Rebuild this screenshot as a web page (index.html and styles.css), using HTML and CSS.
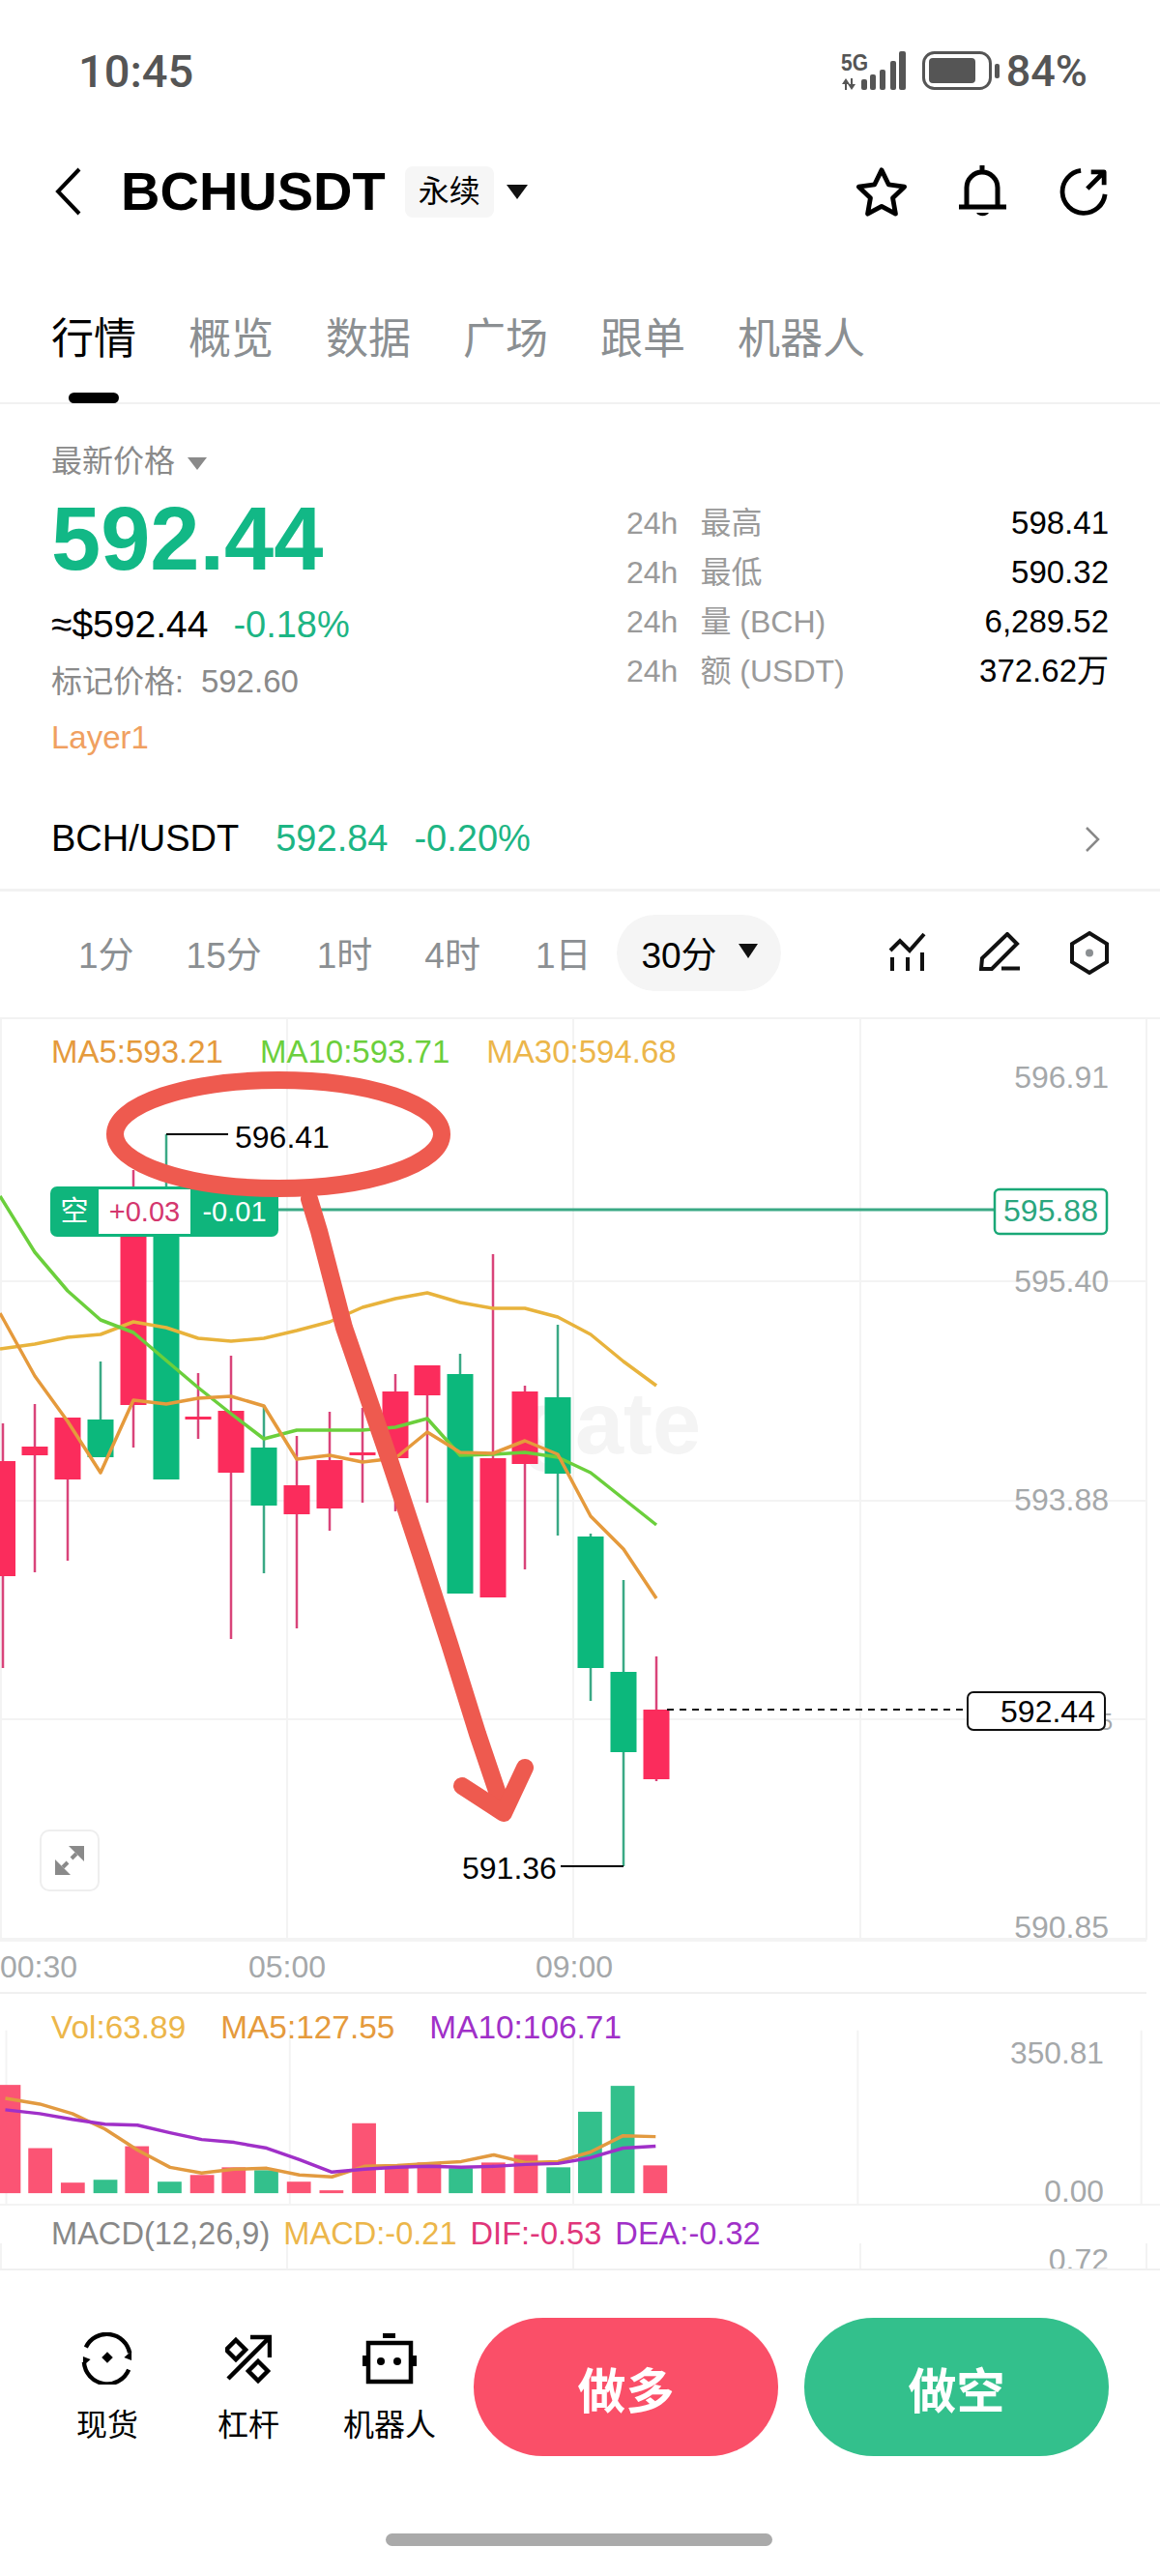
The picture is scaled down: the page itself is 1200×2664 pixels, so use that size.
FILE: index.html
```html
<!DOCTYPE html>
<html lang="zh-CN">
<head>
    <meta charset="UTF-8">
    <meta name="viewport" content="width=device-width, initial-scale=1.0">
    <title>BCHUSDT</title>
    <link rel="stylesheet" href="styles.css">
</head>
<body>

<!-- status bar -->
<div class="status-bar">
  <span class="clock">10:45</span>
  <div class="status-icons">
    <svg class="signal" viewBox="0 0 70 42">
      <text x="1" y="21" class="signal-text" textLength="28" lengthAdjust="spacingAndGlyphs">5G</text>
      <path d="M6 29 2 35h3v6h2v-6h3zM12 41l4-6h-3v-6h-2v6H8z"/>
      <rect x="22" y="30" width="6" height="11" rx="2"/>
      <rect x="31" y="25" width="6" height="16" rx="2"/>
      <rect x="41" y="20" width="6" height="21" rx="2"/>
      <rect x="52" y="11" width="6" height="30" rx="2"/>
      <rect x="61" y="1" width="7" height="40" rx="2"/>
    </svg>
    <svg class="battery" viewBox="0 0 80 40">
      <rect x="1.500" y="1.500" width="69" height="37" rx="11" fill="none" stroke="#555" stroke-width="3"/>
      <rect x="7" y="7" width="48" height="26" rx="4" fill="#555"/>
      <rect x="75" y="13" width="5" height="15" rx="2" fill="#555"/>
    </svg>
    <span class="battery-text">84%</span>
  </div>
</div>

<!-- header -->
<div class="top-nav">
  <svg class="back-icon" viewBox="0 0 30 50"><path d="M26 2 4 25l22 23"/></svg>
  <h1 class="symbol">BCHUSDT</h1>
  <span class="contract-tag">永续</span>
  <span class="caret caret-dark"></span>
  <div class="nav-actions">
    <svg class="nav-icon icon-star" viewBox="0 0 56 54"><path d="M28 4l7.500 15.500 17 2.500-12.500 12 3 17-15-8-15 8 3-17L3.500 22l17-2.500z"/></svg>
    <svg class="nav-icon icon-bell" viewBox="0 0 50 54"><path d="M8 43V23a16 16 0 0 1 32 0V43M0 43h49M24 0v7"/><path class="solid" d="M18 49h13a7 5 0 0 1-13 0z"/></svg>
    <svg class="nav-icon icon-share" viewBox="0 0 52 52"><path d="M23 3.500A23 23 0 1 0 49 29M30 23 47 6M34 5h14v14"/></svg>
  </div>
</div>

<!-- tabs -->
<div class="tabs">
  <div class="tab active">行情<span class="tab-line"></span></div>
  <div class="tab">概览</div>
  <div class="tab">数据</div>
  <div class="tab">广场</div>
  <div class="tab">跟单</div>
  <div class="tab">机器人</div>
</div>

<!-- price info -->
<div class="market-info">
  <div class="price-col">
    <div class="price-label">最新价格<span class="caret caret-grey"></span></div>
    <div class="last-price">592.44</div>
    <div class="usd-row"><span>≈$592.44</span><span class="green">-0.18%</span></div>
    <div class="mark-price">标记价格:<span class="mark-value">592.60</span></div>
    <div class="layer-tag">Layer1</div>
  </div>
  <div class="stats-col">
    <div class="stat-row"><span class="stat-name">24h</span><span class="stat-name">最高</span><span class="stat-value">598.41</span></div>
    <div class="stat-row"><span class="stat-name">24h</span><span class="stat-name">最低</span><span class="stat-value">590.32</span></div>
    <div class="stat-row"><span class="stat-name">24h</span><span class="stat-name">量 (BCH)</span><span class="stat-value">6,289.52</span></div>
    <div class="stat-row"><span class="stat-name">24h</span><span class="stat-name">额 (USDT)</span><span class="stat-value">372.62万</span></div>
  </div>
</div>

<div class="spot-row">
  <span class="spot-name">BCH/USDT</span>
  <span class="green">592.84</span>
  <span class="green">-0.20%</span>
  <svg class="spot-arrow" viewBox="0 0 16 26"><path d="M2 1l12 12L2 25"/></svg>
</div>

<!-- time frames -->
<div class="timeframes">
  <span class="tf tf-1m">1分</span>
  <span class="tf tf-15m">15分</span>
  <span class="tf tf-1h">1时</span>
  <span class="tf tf-4h">4时</span>
  <span class="tf tf-1d">1日</span>
  <span class="tf-pill">30分<span class="caret caret-small"></span></span>
  <div class="tool-icons">
    <svg class="tool-chart" viewBox="0 0 40 44"><path d="M2 20l10-10 10 10L37 3M4 27v14M20 27v14M35 22v19"/></svg>
    <svg class="tool-pencil" viewBox="0 0 44 42"><path d="M29 2l10 10-26 26H2l1-11zM23 37.500h19"/></svg>
    <svg class="tool-hex" viewBox="0 0 42 46"><path d="M21 3l18 11v19L21 44 3 33V14z"/><circle class="solid" cx="21" cy="23.500" r="4"/></svg>
  </div>
</div>

<!-- candle chart -->
<div class="kline-pane">
  <svg class="pane-svg" viewBox="0 1054 1200 952">
    <path class="grid" d="M1 1054V2006M297 1054V2006M593 1054V2006M890 1054V2006M1186 1054V2006M0 1325H1186M0 1552H1186M0 1778H1186M0 2005H1186"/>
    <text class="watermark" x="540" y="1503">gate</text>

    <path class="wick-red" d="M3 1472V1725M36 1452V1626M70 1466V1614M138 1210V1497M205 1420V1488M239 1402V1695M307 1485V1684M341 1460V1583M375 1456V1554M409 1421V1563M442 1412V1554M510 1297V1652M543 1433V1623M679 1713V1842"/>
    <path class="wick-green" d="M104 1408V1507M172 1173V1530M273 1453V1627M476 1400V1648M577 1370V1588M611 1586V1759M645 1634V1930"/>

    <g class="body-red">
      <rect x="-11" y="1511" width="27" height="119"/>
      <rect x="22.500" y="1496" width="27" height="9"/>
      <rect x="56.500" y="1466" width="27" height="64"/>
      <rect x="124.500" y="1270" width="27" height="183"/>
      <rect x="191.500" y="1465" width="27" height="3"/>
      <rect x="225.500" y="1459" width="27" height="64"/>
      <rect x="293.500" y="1536" width="27" height="30"/>
      <rect x="327.500" y="1510" width="27" height="50"/>
      <rect x="361.500" y="1502" width="27" height="3"/>
      <rect x="395.500" y="1439" width="27" height="69"/>
      <rect x="428.500" y="1412" width="27" height="31"/>
      <rect x="496.500" y="1508" width="27" height="144"/>
      <rect x="529.500" y="1439" width="27" height="75"/>
      <rect x="665.500" y="1768" width="27" height="72"/>
    </g>
    <g class="body-green">
      <rect x="90.500" y="1468" width="27" height="39"/>
      <rect x="158.500" y="1270" width="27" height="260"/>
      <rect x="259.500" y="1497" width="27" height="60"/>
      <rect x="462.500" y="1421" width="27" height="227"/>
      <rect x="563.500" y="1445" width="27" height="79"/>
      <rect x="597.500" y="1589" width="27" height="136"/>
      <rect x="631.500" y="1729" width="27" height="83"/>
    </g>

    <!-- moving averages -->
    <polyline class="ma ma30" points="0,1395 36,1390 70,1383 104,1380 138,1367 172,1373 205,1384 239,1387 273,1384 307,1376 341,1367 375,1352 409,1343 442,1337 476,1347 510,1353 543,1353 577,1362 611,1380 645,1408 679,1433"/>
    <polyline class="ma ma10" points="0,1237 36,1295 70,1335 104,1365 138,1378 172,1407 205,1435 239,1462 273,1488 307,1479 341,1479 375,1479 409,1476 442,1467 476,1505 510,1504 543,1502 577,1507 611,1523 645,1550 679,1577"/>
    <polyline class="ma ma5" points="0,1358 36,1423 70,1470 104,1523 138,1448 172,1452 205,1446 239,1444 273,1454 307,1509 341,1505 375,1512 409,1508 442,1481 476,1502 510,1503 543,1490 577,1504 611,1568 645,1602 679,1653"/>

    <!-- price lines and labels -->
    <path class="position-line" d="M288 1251H1030"/>
    <path class="last-line" d="M690 1768H1001"/>
    <path class="leader" d="M172 1173H236M580 1930H645"/>
    <text class="axis" x="1147" y="1125">596.91</text>
    <text class="axis" x="1147" y="1336">595.40</text>
    <text class="axis" x="1147" y="1562">593.88</text>
    <text class="axis" x="1147" y="2004">590.85</text>
    <text class="peak" x="243" y="1187">596.41</text>
    <text class="peak" x="478" y="1943">591.36</text>
    <text class="axis axis-peek" x="1151" y="1789">5</text>
    <rect class="box-position" x="1029" y="1230" width="116" height="46" rx="5"/>
    <text class="box-text green-text" x="1087" y="1263">595.88</text>
    <rect class="box-last" x="1001" y="1750" width="142" height="39" rx="6"/>
    <text class="box-text" x="1084" y="1781">592.44</text>
  </svg>

  <div class="legend kline-legend">
    <span class="c-orange">MA5:593.21</span>
    <span class="c-green">MA10:593.71</span>
    <span class="c-yellow">MA30:594.68</span>
  </div>

  <div class="position-tag">
    <span class="tag-side">空</span>
    <span class="tag-pnl">+0.03</span>
    <span class="tag-rate">-0.01</span>
  </div>

  <div class="expand-btn">
    <svg viewBox="0 0 62 64"><path class="solid" d="M46 17v16L30 17zM16 47V31l16 16z"/><path d="M38 25l-5 5M24 39l5-5"/></svg>
  </div>

  <!-- hand drawn marks on the screenshot -->
  <svg class="pane-svg" viewBox="0 1054 1200 952">
    <ellipse class="mark" cx="288" cy="1173" rx="169" ry="56"/>
    <path class="mark" d="M320 1240 330 1273 356 1373 402 1507 436 1610 465 1700 494 1793 519 1867"/>
    <path class="mark" d="M478 1847 521 1875 543 1828"/>
  </svg>
</div>

<div class="time-axis">
  <span>00:30</span>
  <span>05:00</span>
  <span>09:00</span>
</div>

<!-- volume -->
<div class="vol-pane">
  <svg class="pane-svg" viewBox="0 2062 1200 219">
    <path class="grid" d="M1 2100V2281M297 2100V2281M593 2100V2281M890 2100V2281M1186 2100V2281"/>
    <g class="vol-red">
      <rect x="-9" y="2157" width="25" height="113"/>
      <rect x="24" y="2223" width="25" height="47"/>
      <rect x="58" y="2259" width="25" height="11"/>
      <rect x="125" y="2221" width="25" height="49"/>
      <rect x="193" y="2251" width="25" height="19"/>
      <rect x="226" y="2243" width="25" height="27"/>
      <rect x="294" y="2258" width="25" height="12"/>
      <rect x="328" y="2267" width="25" height="3"/>
      <rect x="362" y="2197" width="25" height="73"/>
      <rect x="396" y="2241" width="25" height="29"/>
      <rect x="430" y="2238" width="25" height="32"/>
      <rect x="497" y="2238" width="25" height="32"/>
      <rect x="531" y="2230" width="25" height="40"/>
      <rect x="666" y="2241" width="25" height="29"/>
    </g>
    <g class="vol-green">
      <rect x="92" y="2256" width="25" height="14"/>
      <rect x="159" y="2258" width="25" height="12"/>
      <rect x="260" y="2246" width="25" height="24"/>
      <rect x="463" y="2244" width="25" height="26"/>
      <rect x="565" y="2243" width="25" height="27"/>
      <rect x="598" y="2185" width="25" height="85"/>
      <rect x="632" y="2158" width="25" height="112"/>
    </g>
    <polyline class="ma vol-ma5" points="0,2171 36,2177 70,2187 104,2203 138,2225 172,2243 205,2249 239,2245 273,2244 307,2251 341,2253 375,2242 409,2241 442,2239 476,2237 510,2230 543,2238 577,2237 611,2227 645,2210 679,2211"/>
    <polyline class="ma vol-ma10" points="0,2183 36,2187 70,2193 104,2198 138,2199 172,2207 205,2214 239,2217 273,2223 307,2235 341,2248 375,2245 409,2243 442,2242 476,2243 510,2242 543,2240 577,2239 611,2233 645,2223 679,2221"/>
    <text class="axis" x="1147" y="2135">350.81</text>
    <text class="axis" x="1147" y="2279">0.00</text>
  </svg>
  <div class="legend vol-legend">
    <span class="c-yellow">Vol:63.89</span>
    <span class="c-orange">MA5:127.55</span>
    <span class="c-purple">MA10:106.71</span>
  </div>
</div>

<!-- macd -->
<div class="macd-pane">
  <svg class="pane-svg" viewBox="0 2281 1200 65">
    <path class="grid" d="M1 2320V2346M297 2320V2346M593 2320V2346M890 2320V2346M1186 2320V2346"/>
    <text class="axis" x="1147" y="2348">0.72</text>
  </svg>
  <div class="legend macd-legend">
    <span class="c-grey">MACD(12,26,9)</span>
    <span class="c-yellow">MACD:-0.21</span>
    <span class="c-pink">DIF:-0.53</span>
    <span class="c-purple">DEA:-0.32</span>
  </div>
</div>

<!-- bottom actions -->
<div class="bottom-bar">
  <div class="action-row">
    <div class="action">
      <svg class="action-spot" viewBox="0 0 56 56">
        <path d="M5 16A25 25 0 0 1 52 22M51 40A25 25 0 0 1 3 32"/>
        <path class="solid" d="M46 27l8-7v10zM10 29l-8 7V26zM28 21l6 6-6 6-6-6z"/>
      </svg>
      <span>现货</span>
    </div>
    <div class="action">
      <svg class="action-lever" viewBox="0 0 48 48">
        <path d="M3 45 46 2M26 2h20v21M11 5l10 10-10 10L1 15zM34 27l10 10-10 10-10-10z"/>
      </svg>
      <span>杠杆</span>
    </div>
    <div class="action">
      <svg class="action-robot" viewBox="0 0 56 52">
        <path d="M6 10h44v40H6z"/>
        <path class="solid" d="M21 0h13v5H21zM0 23h4v11H0zM52 23h4v11h-4z"/>
        <circle class="solid" cx="19" cy="29" r="4"/>
        <circle class="solid" cx="36" cy="29" r="4"/>
      </svg>
      <span>机器人</span>
    </div>
    <button class="trade-btn btn-long">做多</button>
    <button class="trade-btn btn-short">做空</button>
  </div>
  <div class="home-bar"></div>
</div>

</body>
</html>
```
FILE: styles.css
```css
* {
  box-sizing: border-box;
}

body {
  margin: 0;
  width: 1200px;
  height: 2664px;
  overflow: hidden;
  background: #fff;
  color: #000;
  font-family: "Liberation Sans", "Noto Sans CJK SC", sans-serif;
}

svg {
  display: block;
}

.green {
  color: #1db584;
}

.solid {
  fill: currentColor;
  stroke: none;
}

/* carets */
.caret {
  display: inline-block;
  width: 0;
  height: 0;
  border-style: solid;
  border-color: transparent;
  border-bottom-width: 0;
}

.caret-dark {
  margin-left: 13px;
  border-width: 15px 11px 0;
  border-top-color: #111;
}

.caret-grey {
  margin-left: 13px;
  vertical-align: middle;
  border-width: 13px 10px 0;
  border-top-color: #8a8a8a;
}

.caret-small {
  margin-left: 22px;
  margin-top: -4px;
  vertical-align: middle;
  border-width: 15px 10px 0;
  border-top-color: #111;
}

/* status bar */
.status-bar {
  height: 146px;
  padding: 0 75px 0 81px;
  display: flex;
  justify-content: space-between;
  align-items: center;
  color: #555;
  font-family: Roboto, "Liberation Sans", sans-serif;
}

.clock {
  font-size: 47px;
  font-weight: 500;
}

.status-icons {
  display: flex;
  align-items: center;
}

.signal {
  width: 70px;
  height: 42px;
  fill: #555;
}

.signal-text {
  font-family: "Liberation Sans", sans-serif;
  font-size: 24px;
  font-weight: 700;
}

.battery {
  width: 80px;
  height: 40px;
  margin-left: 15px;
}

.battery-text {
  margin-left: 7px;
  font-size: 45px;
  font-weight: 500;
}

/* header */
.top-nav {
  height: 102px;
  padding: 2px 54px 0 56px;
  display: flex;
  align-items: center;
}

.back-icon {
  width: 30px;
  height: 50px;
  fill: none;
  stroke: #000;
  stroke-width: 4;
}

.symbol {
  margin: 0 0 0 39px;
  font-size: 56px;
  font-weight: 700;
  line-height: 64px;
}

.contract-tag {
  width: 92px;
  height: 53px;
  margin-left: 20px;
  background: #f6f6f6;
  border-radius: 8px;
  font-size: 32px;
  line-height: 53px;
  text-align: center;
}

.nav-actions {
  margin-left: auto;
  display: flex;
  align-items: center;
}

.nav-icon {
  fill: none;
  stroke: #000;
  stroke-width: 5;
  stroke-linejoin: round;
}

.icon-star {
  width: 54px;
  height: 52px;
}

.icon-bell {
  width: 50px;
  height: 54px;
  margin-left: 53px;
}

.icon-share {
  width: 50px;
  height: 50px;
  margin-left: 54px;
}

/* tabs */
.tabs {
  height: 170px;
  padding: 80px 0 0 53px;
  display: flex;
  gap: 54px;
  border-bottom: 2px solid #f1f1f1;
}

.tab {
  position: relative;
  height: 46px;
  font-size: 44px;
  line-height: 46px;
  color: #8b8f92;
}

.tab.active {
  color: #000;
}

.tab-line {
  position: absolute;
  left: 18px;
  top: 78px;
  width: 52px;
  height: 11px;
  border-radius: 6px;
  background: #000;
}

/* price block */
.market-info {
  height: 401px;
  padding: 0 53px;
  display: flex;
  justify-content: space-between;
}

.price-label {
  margin-top: 39px;
  font-size: 32px;
  line-height: 40px;
  color: #8a8a8a;
}

.last-price {
  margin-top: 14px;
  font-size: 92px;
  font-weight: 700;
  line-height: 92px;
  color: #12b886;
}

.usd-row {
  margin-top: 21px;
  display: flex;
  gap: 26px;
  font-size: 39px;
  line-height: 44px;
}

.usd-row .green {
  font-size: 38px;
}

.mark-price {
  margin-top: 17px;
  font-size: 32px;
  line-height: 40px;
  color: #8a8a8a;
}

.mark-value {
  margin-left: 18px;
  font-size: 33px;
}

.layer-tag {
  margin-top: 18px;
  font-size: 33px;
  line-height: 40px;
  color: #f0a060;
}

.stats-col {
  width: 499px;
  padding-top: 97px;
}

.stat-row {
  height: 51px;
  display: flex;
  align-items: baseline;
  gap: 23px;
  font-size: 32px;
  line-height: 51px;
}

.stat-name {
  color: #9a9a9a;
}

.stat-value {
  margin-left: auto;
  font-size: 33px;
}

.spot-row {
  height: 103px;
  padding: 0 62px 3px 53px;
  display: flex;
  align-items: center;
  font-size: 38px;
  border-bottom: 3px solid #f2f2f2;
}

.spot-name {
  margin-right: 38px;
}

.spot-row .green + .green {
  margin-left: 27px;
}

.spot-arrow {
  width: 16px;
  height: 26px;
  margin-left: auto;
  fill: none;
  stroke: #888;
  stroke-width: 2.500;
}

/* time frames */
.timeframes {
  height: 132px;
  padding: 0 0 4px 81px;
  display: flex;
  align-items: center;
  font-size: 37px;
  color: #8b8f92;
  border-bottom: 2px solid #f2f2f2;
}

.tf-15m {
  margin-left: 54px;
}

.tf-1h {
  margin-left: 57px;
}

.tf-4h {
  margin-left: 54px;
}

.tf-1d {
  margin-left: 57px;
}

.tf-pill {
  width: 170px;
  height: 79px;
  margin-left: 27px;
  padding-left: 25px;
  display: flex;
  align-items: center;
  background: #f5f5f5;
  border-radius: 40px;
  color: #000;
}

.tool-icons {
  margin-left: auto;
  padding-right: 52px;
  display: flex;
  align-items: center;
}

.tool-icons svg {
  fill: none;
  stroke: #111;
  stroke-width: 4;
}

.tool-chart {
  width: 40px;
  height: 44px;
}

.tool-pencil {
  width: 44px;
  height: 42px;
  margin-left: 54px;
}

.tool-hex {
  width: 42px;
  height: 46px;
  margin-left: 49px;
}

/* chart panes */
.kline-pane {
  position: relative;
  height: 952px;
}

.vol-pane {
  position: relative;
  height: 219px;
  border-bottom: 2px solid #f3f3f3;
}

.macd-pane {
  position: relative;
  height: 65px;
  overflow: hidden;
}

.pane-svg {
  position: absolute;
  left: 0;
  top: 0;
  width: 1200px;
  height: 100%;
  overflow: visible;
}

.grid {
  fill: none;
  stroke: #f3f3f3;
  stroke-width: 2;
}

.watermark {
  font-size: 90px;
  font-weight: 700;
  fill: #f4f4f4;
}

.wick-red,
.wick-green {
  fill: none;
  stroke-width: 2.500;
}

.wick-red {
  stroke: #d9447a;
}

.wick-green {
  stroke: #3aa985;
}

.body-red {
  fill: #fb2c5c;
}

.body-green {
  fill: #0cb87c;
}

.ma {
  fill: none;
  stroke-width: 3.500;
  stroke-linejoin: round;
}

.ma30 {
  stroke: #e8b33c;
}

.ma10 {
  stroke: #6bcf3c;
}

.ma5 {
  stroke: #e59a3c;
}

.vol-ma5 {
  stroke: #e29a40;
}

.vol-ma10 {
  stroke: #a030c8;
}

.vol-red {
  fill: #fb5474;
}

.vol-green {
  fill: #33c08c;
}

.position-line {
  fill: none;
  stroke: #3aa985;
  stroke-width: 3;
}

.last-line {
  fill: none;
  stroke: #111;
  stroke-width: 2;
  stroke-dasharray: 7 6;
}

.leader {
  fill: none;
  stroke: #000;
  stroke-width: 2;
}

.axis {
  font-size: 32px;
  fill: #a5a8aa;
  text-anchor: end;
}

.axis-peek {
  font-size: 24px;
}

.peak {
  font-size: 32px;
  fill: #000;
}

.box-position {
  fill: #fff;
  stroke: #1aa877;
  stroke-width: 2.500;
}

.box-last {
  fill: #fff;
  stroke: #111;
  stroke-width: 2;
}

.box-text {
  font-size: 32px;
  fill: #000;
  text-anchor: middle;
}

.green-text {
  fill: #2aa67e;
}

/* legends */
.legend {
  position: absolute;
  left: 53px;
  display: flex;
  font-size: 33px;
  line-height: 40px;
}

.kline-legend {
  top: 14px;
  gap: 38px;
}

.vol-legend {
  top: 15px;
  gap: 36px;
  font-size: 33.400px;
}

.macd-legend {
  top: 9px;
  gap: 14px;
  font-size: 32.600px;
}

.c-orange {
  color: #e59a3c;
}

.c-green {
  color: #6bcf3c;
}

.c-yellow {
  color: #ecb64a;
}

.c-purple {
  color: #a030c8;
}

.c-pink {
  color: #e0357a;
}

.c-grey {
  color: #888;
}

/* open position tag */
.position-tag {
  position: absolute;
  left: 52px;
  top: 173px;
  width: 236px;
  height: 52px;
  padding: 3px 0;
  display: flex;
  align-items: stretch;
  background: #0fb57c;
  border-radius: 7px;
  font-size: 29px;
  line-height: 46px;
  color: #fff;
}

.tag-side {
  width: 50px;
  text-align: center;
}

.tag-pnl {
  width: 95px;
  background: #fff;
  color: #d4376e;
  text-align: center;
}

.tag-rate {
  width: 91px;
  text-align: center;
}

.expand-btn {
  position: absolute;
  left: 41px;
  top: 838px;
  width: 62px;
  height: 64px;
  border: 2px solid #eee;
  border-radius: 10px;
  color: #8a8a8a;
}

.expand-btn svg {
  position: absolute;
  left: -2px;
  top: -2px;
  width: 62px;
  height: 64px;
  fill: none;
  stroke: #8a8a8a;
  stroke-width: 4;
}

/* red marks */
.mark {
  fill: none;
  stroke: #ee5a4f;
  stroke-width: 18;
  stroke-linecap: round;
  stroke-linejoin: round;
}

/* time axis */
.time-axis {
  height: 56px;
  display: grid;
  grid-template-columns: 257px 297px 1fr;
  align-items: center;
  width: 1186px;
  font-size: 32px;
  color: #a5a8aa;
  border-top: 2px solid #f3f3f3;
  border-bottom: 2px solid #f0f0f0;
}

/* bottom */
.bottom-bar {
  height: 318px;
  padding-top: 49px;
  border-top: 2px solid #f0f0f0;
}

.action-row {
  padding-left: 38px;
  display: flex;
  align-items: flex-start;
}

.action {
  width: 146px;
  padding-top: 15px;
  display: flex;
  flex-direction: column;
  align-items: center;
  font-size: 32px;
  line-height: 40px;
}

.action svg {
  height: 54px;
  margin-bottom: 22px;
  fill: none;
  stroke: #000;
  stroke-width: 4.500;
}

.action-spot {
  width: 56px;
}

.action-lever {
  width: 48px;
}

.action-robot {
  width: 56px;
}

.trade-btn {
  width: 315px;
  height: 143px;
  border: none;
  border-radius: 72px;
  color: #fff;
  font-family: inherit;
  font-size: 50px;
  font-weight: 700;
}

.btn-long {
  margin-left: 14px;
  background: #fa4f68;
}

.btn-short {
  margin-left: 27px;
  background: #33c08c;
}

.home-bar {
  width: 400px;
  height: 13px;
  margin: 80px 0 0 399px;
  background: #aaa;
  border-radius: 7px;
}
```
